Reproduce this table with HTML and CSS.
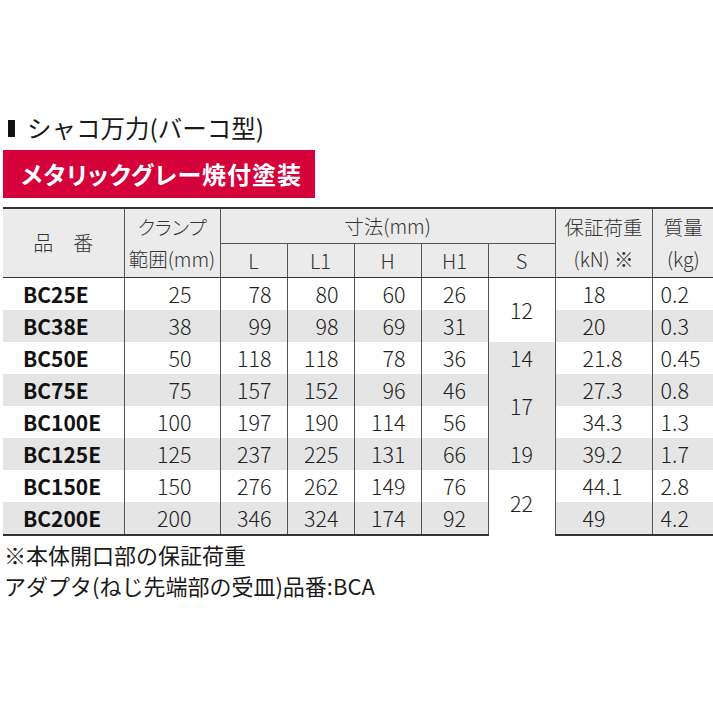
FILE: index.html
```html
<!DOCTYPE html>
<html lang="ja">
<head>
<meta charset="utf-8">
<link rel="stylesheet" href="styles.css">
</head>
<body>
<div class="title"><span class="bar"></span><span>シャコ万力(バーコ型)</span></div>
<div class="banner">メタリックグレー焼付塗装</div>
<table class="spec">
  <colgroup>
    <col class="c-name"><col class="c-clamp"><col class="c-dim"><col class="c-dim"><col class="c-dim"><col class="c-dim"><col class="c-dim"><col class="c-load"><col class="c-mass">
  </colgroup>
  <thead>
    <tr class="h1">
      <th rowspan="2" class="first">品　番</th>
      <th rowspan="2" class="two">クランプ<br>範囲(mm)</th>
      <th colspan="5">寸法(mm)</th>
      <th rowspan="2" class="two">保証荷重<br>(kN) ※</th>
      <th rowspan="2" class="two">質量<br>(kg)</th>
    </tr>
    <tr class="h2">
      <th>L</th><th>L1</th><th>H</th><th>H1</th><th>S</th>
    </tr>
  </thead>
  <tbody>
    <tr><td class="name">BC25E</td><td class="clamp">25</td><td class="r">78</td><td class="r">80</td><td class="r">60</td><td class="c">26</td><td class="s" rowspan="2">12</td><td class="load">18</td><td class="mass">0.2</td></tr>
    <tr class="g"><td class="name">BC38E</td><td class="clamp">38</td><td class="r">99</td><td class="r">98</td><td class="r">69</td><td class="c">31</td><td class="load">20</td><td class="mass">0.3</td></tr>
    <tr><td class="name">BC50E</td><td class="clamp">50</td><td class="r">118</td><td class="r">118</td><td class="r">78</td><td class="c">36</td><td class="s sg">14</td><td class="load">21.8</td><td class="mass">0.45</td></tr>
    <tr class="g"><td class="name">BC75E</td><td class="clamp">75</td><td class="r">157</td><td class="r">152</td><td class="r">96</td><td class="c">46</td><td class="s" rowspan="2">17</td><td class="load">27.3</td><td class="mass">0.8</td></tr>
    <tr><td class="name">BC100E</td><td class="clamp">100</td><td class="r">197</td><td class="r">190</td><td class="r">114</td><td class="c">56</td><td class="load">34.3</td><td class="mass">1.3</td></tr>
    <tr class="g"><td class="name">BC125E</td><td class="clamp">125</td><td class="r">237</td><td class="r">225</td><td class="r">131</td><td class="c">66</td><td class="s sg">19</td><td class="load">39.2</td><td class="mass">1.7</td></tr>
    <tr><td class="name">BC150E</td><td class="clamp">150</td><td class="r">276</td><td class="r">262</td><td class="r">149</td><td class="c">76</td><td class="s" rowspan="2">22</td><td class="load">44.1</td><td class="mass">2.8</td></tr>
    <tr class="g"><td class="name">BC200E</td><td class="clamp">200</td><td class="r">346</td><td class="r">324</td><td class="r">174</td><td class="c">92</td><td class="load">49</td><td class="mass">4.2</td></tr>
  </tbody>
</table>
<div class="notes">
  <p>※本体開口部の保証荷重</p>
  <p>アダプタ(ねじ先端部の受皿)品番:BCA</p>
</div>
</body>
</html>
```

FILE: styles.css
```css
html, body {
  margin: 0;
  padding: 0;
  background: #ffffff;
  width: 713px;
  overflow: hidden;
}
body {
  font-family: "Noto Sans CJK JP", "Noto Sans", sans-serif;
  color: #222;
}
.title {
  margin-top: 113px;
  height: 30px;
  display: flex;
  align-items: center;
  font-size: 24.5px;
  line-height: 30px;
  color: #1a1a1a;
  font-weight: 400;
}
.bar {
  display: inline-block;
  width: 7px;
  height: 17px;
  background: #111;
  margin-left: 8px;
  margin-right: 12px;
}
.banner {
  margin: 7px 0 0 3px;
  width: 294px;
  height: 48px;
  padding-left: 18px;
  background: #d5013b;
  color: #fff;
  font-weight: 700;
  font-size: 24px;
  line-height: 48px;
  font-feature-settings: "palt";
  letter-spacing: 1px;
}
.spec {
  margin: 9px 0 0 3px;
  width: 710px;
  table-layout: fixed;
  border-collapse: collapse;
  font-size: 21.5px;
  font-weight: 300;
}
.c-name { width: 121px; }
.c-clamp { width: 96px; }
.c-dim { width: 67px; }
.c-load { width: 97px; }
.c-mass { width: 62px; }
.spec th {
  background: #ebebeb;
  font-weight: 300;
  color: #333;
  font-size: 19.5px;
  line-height: 30px;
  padding: 0;
  border-left: 1px solid #555;
  font-feature-settings: "palt";
}
.spec th.first { border-left: none; font-size: 20px; }
.spec .h1 th { border-top: 2px solid #333; height: 34px; }
.spec .h1 th[colspan] { border-bottom: 1px solid #555; vertical-align: middle; }
.spec .h2 th { height: 33px; font-size: 20px; }
.spec thead tr.h2 th, .spec thead th[rowspan] { border-bottom: 1px solid #333; }
.spec th.two { line-height: 32px; font-size: 19.5px; }
.spec td {
  height: 32px;
  padding: 0;
  line-height: 30px;
  border-left: 1px solid #555;
  background: #fff;
}
.spec tr.g td { background: #e5e5e5; }
.spec td.name {
  border-left: none;
  font-weight: 700;
  padding-left: 20px;
  color: #111;
  font-size: 21px;
}
.spec td.clamp { text-align: right; padding-right: 28px; }
.spec td.r { text-align: right; padding-right: 15px; }
.spec td.c { text-align: center; }
.spec td.s { text-align: center; background: #fff; }
.spec td.s.sg { background: #e5e5e5; }
.spec td.load { text-align: left; padding-left: 27px; }
.spec td.mass { text-align: left; padding-left: 8px; }
.spec tbody tr:last-child td { border-bottom: 2px solid #333; }
.notes {
  margin-top: 3px;
  font-size: 22px;
  line-height: 31px;
  color: #1a1a1a;
  padding-left: 4px;
}
.notes p { margin: 0; }
```
